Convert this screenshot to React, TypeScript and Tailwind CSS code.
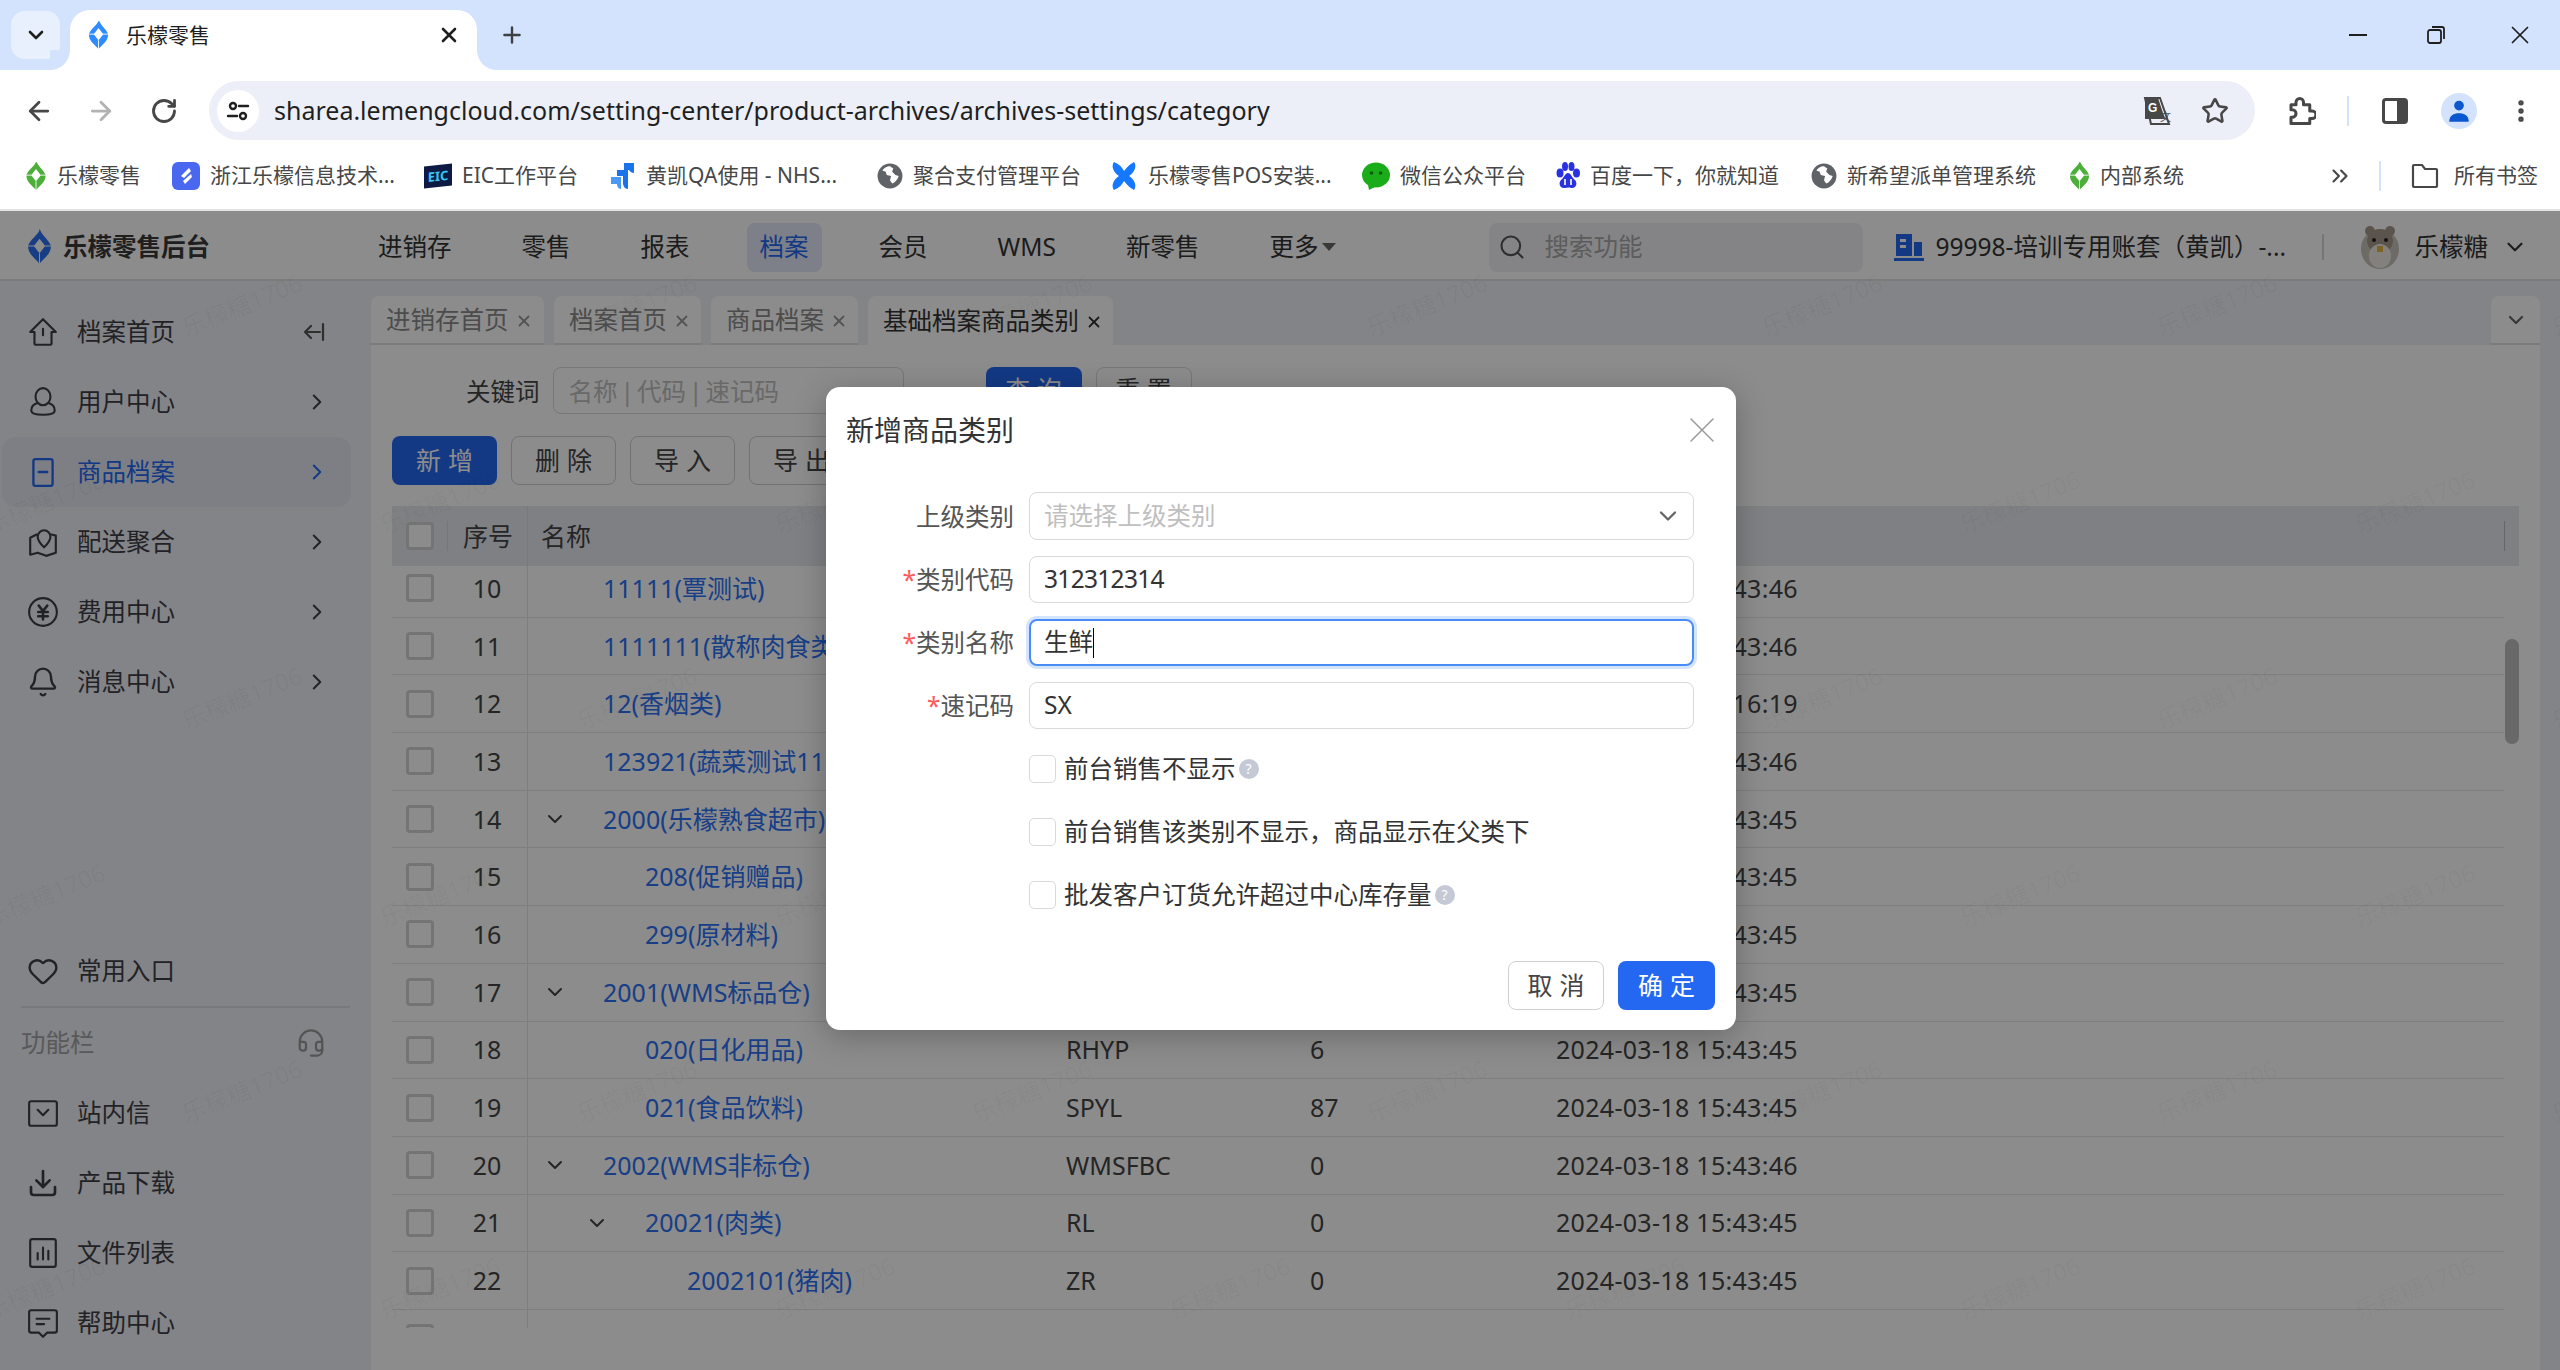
import type { ReactNode } from 'react';
import { ArrowLeft, ArrowRight, Bell, ChevronDown, ChevronRight, ChevronsRight, Download, Headset, Heart, MoreVertical, Plus, RotateCw, Search, Star, X } from 'lucide-react';

function Logo({ className, color = '#2f8cff' }: { className: string; color?: string }) {
  return (
    <svg viewBox="0 0 24 32" className={className}>
      <path d="M12 0C10 5 3 9 1 15c0 8 7 12 11 17 4-5 11-9 11-17-2-6-9-10-11-17Z" fill={color} />
      <path d="M12 8l5.5 7-5.5 7-5.5-7Z" fill="#fff" />
      <path d="M0 15h7M24 15h-7M12 22v10" stroke="#fff" strokeWidth="1" />
    </svg>
  );
}

function Globe({ className }: { className: string }) {
  return (
    <svg viewBox="0 0 24 24" className={className}>
      <circle cx="12" cy="12" r="11.5" fill="#5f6368" />
      <path d="M12 3c-3 0-6 2-7 4l3 1 1 3 4 1-1 4 2 3c3-1 5-4 6-7l-3-1-3-3 1-3Z" fill="#fff" />
    </svg>
  );
}

const bookmarks: { label: string; width: string; icon: ReactNode }[] = [
  { label: '乐檬零售', width: 'w-[147px]', icon: <Logo className="h-[28px] w-[22px]" color="#4caf3a" /> },
  {
    label: '浙江乐檬信息技术...',
    width: 'w-[252px]',
    icon: (
      <svg viewBox="0 0 28 28" className="h-[28px] w-[28px]">
        <rect width="28" height="28" rx="6" fill="#4a67f0" />
        <path d="M17 6l-8 8 3 2 7-7ZM19 12l-8 7 2 3 7-7Z" fill="#fff" />
      </svg>
    ),
  },
  {
    label: 'EIC工作平台',
    width: 'w-[184px]',
    icon: (
      <span className="flex h-[22px] w-[28px] -skew-y-6 items-center justify-center bg-[#0c1a44] text-[13px] leading-none font-bold text-[#35c8f0]">
        EIC
      </span>
    ),
  },
  {
    label: '黄凯QA使用 - NHS...',
    width: 'w-[269px]',
    icon: (
      <svg viewBox="0 0 28 28" className="h-[28px] w-[28px]">
        <path d="M16 1h10v10c-2 0-4-1-5-3h-5Z" fill="#1a73e8" />
        <path d="M9 8h11v19c-3 0-5-3-5-6v-7H9Z" fill="#1a73e8" />
        <path d="M3 15h10v12c-3 0-4-3-4-5H3Z" fill="#4a9af5" />
      </svg>
    ),
  },
  { label: '聚合支付管理平台', width: 'w-[233px]', icon: <Globe className="h-[26px] w-[26px]" /> },
  {
    label: '乐檬零售POS安装...',
    width: 'w-[252px]',
    icon: (
      <svg viewBox="0 0 28 28" className="h-[28px] w-[28px]">
        <path d="M4 0c5 2 8 5 10 9 3-4 6-7 10-9 3 4 1 10-5 14 6 4 8 10 5 14-4-2-7-5-10-9-2 4-5 7-10 9-3-4-1-10 5-14C3 10 1 4 4 0Z" fill="#1677ff" />
      </svg>
    ),
  },
  {
    label: '微信公众平台',
    width: 'w-[194px]',
    icon: (
      <svg viewBox="0 0 28 28" className="h-[28px] w-[28px]">
        <ellipse cx="14" cy="13" rx="14" ry="12.5" fill="#1aad19" />
        <path d="M6 23l1 5 6-3Z" fill="#1aad19" />
        <circle cx="9.500" cy="11" r="1.800" fill="#0d5c0d" />
        <circle cx="18.500" cy="11" r="1.800" fill="#0d5c0d" />
      </svg>
    ),
  },
  {
    label: '百度一下，你就知道',
    width: 'w-[255px]',
    icon: (
      <svg viewBox="0 0 24 28" className="h-[28px] w-[24px]">
        <g fill="#2932e1">
          <ellipse cx="4" cy="11" rx="3.500" ry="4.500" />
          <ellipse cx="9" cy="4.500" rx="3" ry="4.500" />
          <ellipse cx="15.500" cy="4.500" rx="3" ry="4.500" />
          <ellipse cx="20.500" cy="11" rx="3.500" ry="4.500" />
          <path d="M12 11c-3 0-4 5-7 7-3 3-1 9 4 8 2 0 4-1 6 0 5 1 7-5 4-8-3-2-4-7-7-7Z" />
        </g>
        <path d="M9 17v6M15 17v6" stroke="#fff" strokeWidth="1.600" />
      </svg>
    ),
  },
  { label: '新希望派单管理系统', width: 'w-[258px]', icon: <Globe className="h-[26px] w-[26px]" /> },
  { label: '内部系统', width: 'w-[150px]', icon: <Logo className="h-[28px] w-[21px]" color="#4caf3a" /> },
];

const navItems = ['进销存', '零售', '报表', '档案', '会员', 'WMS', '新零售'];

const stroke = { fill: 'none', stroke: 'currentColor', strokeWidth: 2, strokeLinecap: 'round', strokeLinejoin: 'round' } as const;

const sideIcons: Record<string, ReactNode> = {
  home: (
    <svg viewBox="0 0 30 30" className="h-[34px] w-[34px]" {...stroke}>
      <path d="M3 15 15 3l12 12h-4v11a1 1 0 0 1-1 1H8a1 1 0 0 1-1-1V15ZM15 12v6" />
    </svg>
  ),
  user: (
    <svg viewBox="0 0 30 30" className="h-[34px] w-[34px]" {...stroke}>
      <ellipse cx="15" cy="10" rx="7" ry="8" />
      <path d="M10 16c-4 1-6 4-6 7 0 3 4 4 11 4s11-1 11-4c0-3-2-6-6-7" />
    </svg>
  ),
  box: (
    <svg viewBox="0 0 30 30" className="h-[34px] w-[34px]" {...stroke}>
      <path d="M8 3h14a2 2 0 0 1 2 2v21a2 2 0 0 1-2 2H8a2 2 0 0 1-2-2V5a2 2 0 0 1 2-2ZM11 15h8" strokeWidth="2.200" />
    </svg>
  ),
  map: (
    <svg viewBox="0 0 30 30" className="h-[34px] w-[34px]" {...stroke}>
      <path d="M9 8 3 11v16l7-2 8 3 9-3V9l-4-1" />
      <path d="M16 20c-4-4-6-7-6-10a6 6 0 0 1 12 0c0 3-2 6-6 10Z" />
    </svg>
  ),
  yen: (
    <svg viewBox="0 0 30 30" className="h-[34px] w-[34px]" {...stroke}>
      <circle cx="15" cy="15" r="13" />
      <path d="m11 9 4 5 4-5M10.500 15h9M10.500 19h9M15 14v8" strokeWidth="2.400" />
    </svg>
  ),
  mail: (
    <svg viewBox="0 0 30 30" className="h-[32px] w-[32px]" {...stroke}>
      <rect x="2" y="4" width="26" height="23" rx="2" />
      <path d="m10 12 5 5 5-5" />
    </svg>
  ),
  list: (
    <svg viewBox="0 0 30 30" className="h-[32px] w-[32px]" {...stroke}>
      <rect x="3" y="2" width="24" height="26" rx="2" />
      <path d="M10 21v-6M15 21V10M20 21v-8" />
    </svg>
  ),
  help: (
    <svg viewBox="0 0 30 30" className="h-[32px] w-[32px]" {...stroke}>
      <path d="M4 3h22a2 2 0 0 1 2 2v17a2 2 0 0 1-2 2h-7l-4 4-4-4H4a2 2 0 0 1-2-2V5a2 2 0 0 1 2-2ZM9 11h12M9 16h7" />
    </svg>
  ),
};

function SideRow({ icon, label, active, arrow, trailing }: { icon: ReactNode; label: string; active?: boolean; arrow?: boolean; trailing?: ReactNode }) {
  return (
    <div className={`ml-[2px] flex h-[70px] w-[349px] items-center rounded-[14px] pl-[25px] text-[24.500px] ${active ? 'bg-[#e3e7f2] text-[#2468f2]' : 'text-[#3f3f46]'}`}>
      <span className="flex w-[32px] justify-center">{icon}</span>
      <span className="ml-[18px]">{label}</span>
      {arrow && <ChevronRight className="mr-[21px] ml-auto h-[26px] w-[26px]" strokeWidth={1.800} />}
      {trailing}
    </div>
  );
}

const pageTabs = [
  { label: '进销存首页', width: 'w-[173px]' },
  { label: '档案首页', width: 'w-[147px]' },
  { label: '商品档案', width: 'w-[147px]' },
  { label: '基础档案商品类别', width: 'w-[245px]', active: true },
];

const rows = [
  { no: 10, name: '11111(覃测试)', depth: 0, time: '15:43:46' },
  { no: 11, name: '1111111(散称肉食类)', depth: 0, time: '15:43:46' },
  { no: 12, name: '12(香烟类)', depth: 0, time: '15:16:19' },
  { no: 13, name: '123921(蔬菜测试11)', depth: 0, time: '15:43:46' },
  { no: 14, name: '2000(乐檬熟食超市)', depth: 0, open: true, time: '15:43:45' },
  { no: 15, name: '208(促销赠品)', depth: 1, time: '15:43:45' },
  { no: 16, name: '299(原材料)', depth: 1, time: '15:43:45' },
  { no: 17, name: '2001(WMS标品仓)', depth: 0, open: true, time: '15:43:45' },
  { no: 18, name: '020(日化用品)', depth: 1, code: 'RHYP', count: '6', time: '15:43:45' },
  { no: 19, name: '021(食品饮料)', depth: 1, code: 'SPYL', count: '87', time: '15:43:45' },
  { no: 20, name: '2002(WMS非标仓)', depth: 0, open: true, code: 'WMSFBC', count: '0', time: '15:43:46' },
  { no: 21, name: '20021(肉类)', depth: 1, open: true, code: 'RL', count: '0', time: '15:43:45' },
  { no: 22, name: '2002101(猪肉)', depth: 2, code: 'ZR', count: '0', time: '15:43:45' },
];

const depthPad = ['pl-[75px]', 'pl-[117px]', 'pl-[159px]'];
const depthArrow = ['left-[15px]', 'left-[57px]', 'left-[99px]'];

function Box({ className = '' }: { className?: string }) {
  return <span className={`block h-[28px] w-[28px] rounded-[4px] border-[3px] border-[#d4d4d4] bg-white ${className}`} />;
}

function Field({ label, required, children }: { label: string; required?: boolean; children: ReactNode }) {
  return (
    <div className="flex h-[48px] items-center">
      <label className="w-[188px] pt-[2px] text-right text-[24.500px] text-[#555]">
        {required && <span className="text-[#ff5a5a]">*</span>}
        {label}
      </label>
      <div className="ml-[15px] flex-1">{children}</div>
    </div>
  );
}

function Help() {
  return <span className="ml-[3px] flex h-[20px] w-[20px] items-center justify-center rounded-full bg-[#c5c9d6] text-[14px] leading-none text-white">?</span>;
}

function CheckRow({ children }: { children: ReactNode }) {
  return (
    <div className="ml-[203px] flex h-[28px] items-center">
      <span className="block h-[28px] w-[27px] rounded-[5px] border border-[#d9d9d9] bg-white" />
      <span className="ml-[8px] text-[24.500px] leading-none text-[#333]">{children}</span>
    </div>
  );
}

const watermarkSpots: { x: number; y: number }[] = [];
for (let r = 0; r < 7; r++) {
  for (let c = 0; c < 8; c++) {
    watermarkSpots.push({ x: 45 + c * 395 + (r % 2 ? 0 : 197), y: 305 + r * 196.500 });
  }
}

export default function App() {
  return (
    <div className="relative flex h-[1370px] w-[2560px] flex-col overflow-hidden bg-white font-['Noto_Sans','Noto_Sans_CJK_SC',sans-serif] text-[#333]">
      {/* browser tab strip */}
      <div className="flex h-[70px] shrink-0 bg-[#d3e3fd]">
        <button type="button" className="mt-[11px] ml-[11px] flex h-[48px] w-[49px] items-center justify-center rounded-[14px] bg-[#e9f0fd]">
          <ChevronDown className="h-[24px] w-[24px] text-[#1f1f1f]" strokeWidth={2.600} />
        </button>
        <div className="relative mt-[10px] ml-[10px] flex h-[60px] w-[407px] items-center rounded-t-[20px] bg-white pb-[10px] pl-[18px]">
          <span className="absolute right-full bottom-0 h-[20px] w-[20px] bg-white">
            <span className="block h-full w-full rounded-br-[20px] bg-[#d3e3fd]" />
          </span>
          <span className="absolute bottom-0 left-full h-[20px] w-[20px] bg-white">
            <span className="block h-full w-full rounded-bl-[20px] bg-[#d3e3fd]" />
          </span>
          <Logo className="h-[28px] w-[21px]" />
          <span className="ml-[17px] text-[21px] leading-none text-[#1f1f1f]">乐檬零售</span>
          <X className="absolute top-[13px] right-[16px] h-[24px] w-[24px] text-[#1f1f1f]" strokeWidth={2.600} />
        </div>
        <Plus className="mt-[22px] ml-[22px] h-[26px] w-[26px] text-[#3c4043]" strokeWidth={2.200} />
        <div className="ml-auto flex h-full items-center gap-[59px] pr-[25px] text-[#1f1f1f]">
          <span className="block h-[2px] w-[18px] bg-[#1f1f1f]" />
          <svg viewBox="0 0 20 20" className="h-[20px] w-[20px]" fill="none" stroke="currentColor" strokeWidth="1.800">
            <rect x="2" y="5" width="13" height="13" rx="2" />
            <path d="M6 2h10a2 2 0 0 1 2 2v10" />
          </svg>
          <X className="h-[30px] w-[30px]" strokeWidth={1.400} />
        </div>
      </div>

      {/* address bar */}
      <div className="flex h-[70px] shrink-0 items-center rounded-t-[20px] bg-white pt-[11px]">
        <ArrowLeft className="ml-[24px] h-[30px] w-[30px] text-[#474747]" strokeWidth={2.200} />
        <ArrowRight className="ml-[32px] h-[30px] w-[30px] text-[#b2b2b2]" strokeWidth={2.200} />
        <RotateCw className="ml-[34px] h-[28px] w-[28px] text-[#474747]" strokeWidth={2.400} />
        <div className="ml-[31px] flex h-[59px] w-[2046px] items-center rounded-full bg-[#eceff8]">
          <span className="ml-[8px] flex h-[42px] w-[42px] items-center justify-center rounded-full bg-white">
            <svg viewBox="0 0 24 24" className="h-[24px] w-[24px]" fill="none" stroke="#1f1f1f" strokeWidth="2.400" strokeLinecap="round">
              <circle cx="7" cy="7" r="3" />
              <circle cx="17" cy="17" r="3" />
              <path d="M13 7h9M2 17h9" />
            </svg>
          </span>
          <span className="ml-[15px] text-[25px] leading-none text-[#1f1f1f]">sharea.lemengcloud.com/setting-center/product-archives/archives-settings/category</span>
          <span className="mr-[26px] ml-auto flex items-center gap-[28px] text-[#474747]">
            <svg viewBox="0 0 30 30" className="h-[30px] w-[30px]">
              <path d="M2 2h15l9 26H8Z" fill="none" stroke="#474747" strokeWidth="2" />
              <path d="M2 2h13l7 21H2Z" fill="#474747" />
              <text x="5" y="16" fontSize="12" fontWeight="700" fill="#fff" fontFamily="Liberation Sans">G</text>
              <text x="17" y="25" fontSize="11" fill="#474747" fontFamily="Noto Sans CJK SC">文</text>
            </svg>
            <Star className="h-[28px] w-[28px]" strokeWidth={2.200} />
          </span>
        </div>
        <svg viewBox="0 0 24 24" className="ml-[31px] h-[30px] w-[30px]" fill="none" stroke="#474747" strokeWidth="2.400" strokeLinejoin="round">
          <path d="M4 7h4V5a3 3 0 0 1 6 0v2h5v5h2a3 3 0 0 1 0 6h-2v4H4v-5h1a3 3 0 0 0 0-6H4Z" />
        </svg>
        <span className="ml-[31px] h-[30px] w-[2px] bg-[#d3e3fd]" />
        <svg viewBox="0 0 26 26" className="ml-[33px] h-[26px] w-[26px]" fill="none">
          <rect x="1.500" y="1.500" width="23" height="23" rx="2.500" stroke="#474747" strokeWidth="3" />
          <rect x="15" y="2" width="9" height="22" fill="#474747" />
        </svg>
        <span className="ml-[33px] flex h-[36px] w-[36px] items-center justify-center rounded-full bg-[#d3e3fd]">
          <svg viewBox="0 0 24 24" className="h-[26px] w-[26px]" fill="#0b57d0">
            <circle cx="12" cy="7" r="4.500" />
            <path d="M3 22c0-6 4-8 9-8s9 2 9 8Z" />
          </svg>
        </span>
        <MoreVertical className="ml-[30px] h-[28px] w-[28px] text-[#474747]" strokeWidth={2.600} />
      </div>

      {/* bookmarks */}
      <div className="flex h-[71px] shrink-0 items-center border-b-2 border-[#e4e4e4] bg-white pt-[2px] pl-[25px] text-[21px] leading-none text-[#474747]">
        {bookmarks.map((b) => (
          <div key={b.label} className={`flex shrink-0 items-center gap-[10px] ${b.width}`}>
            {b.icon}
            <span className="whitespace-nowrap">{b.label}</span>
          </div>
        ))}
        <ChevronsRight className="ml-[108px] h-[26px] w-[26px]" strokeWidth={2} />
        <span className="ml-[26px] h-[30px] w-[2px] bg-[#d3e3fd]" />
        <svg viewBox="0 0 28 26" className="ml-[30px] h-[26px] w-[28px]" fill="none" stroke="#474747" strokeWidth="2.200">
          <path d="M2 3a1 1 0 0 1 1-1h8l3 4h11a1 1 0 0 1 1 1v16a1 1 0 0 1-1 1H3a1 1 0 0 1-1-1Z" />
        </svg>
        <span className="ml-[15px]">所有书签</span>
      </div>

      {/* app */}
      <div className="relative flex min-h-0 flex-1 flex-col bg-[#eef0f6]">
        <header className="flex h-[70px] shrink-0 items-center border-b-2 border-[#e0e0e0] bg-white pt-[4px] text-[24.500px] leading-none">
          <Logo className="ml-[27px] h-[36px] w-[25px]" color="#2b6ff0" />
          <span className="ml-[11px] font-bold text-[#3a3a3a]">乐檬零售后台</span>
          <nav className="ml-[168px] flex items-center gap-[70px]">
            {navItems.map((item) => (
              <span key={item} className={item === '档案' ? '-mx-[13px] flex h-[49px] items-center rounded-[8px] bg-[#e3e9f8] px-[13px] text-[#2468f2]' : 'text-[#333]'}>
                {item}
              </span>
            ))}
            <span className="flex items-center text-[#333]">
              更多
              <span className="ml-[4px] h-0 w-0 border-x-[7px] border-t-[8px] border-x-transparent border-t-[#666]" />
            </span>
          </nav>
          <div className="ml-[153px] flex h-[49px] w-[374px] items-center rounded-[8px] bg-[#f0f1f5] text-[#a8a8a8]">
            <Search className="ml-[9px] h-[28px] w-[28px] text-[#555]" strokeWidth={1.800} />
            <span className="ml-[18px]">搜索功能</span>
          </div>
          <svg viewBox="0 0 30 28" className="ml-[31px] h-[28px] w-[30px]" fill="#2468f2">
            <path d="M2 1h16v22H2ZM20 9h8v14h-8ZM0 25h30v3H0Z" />
            <path d="M6 6h6v3H6ZM6 12h6v3H6Z" fill="#fff" />
          </svg>
          <span className="ml-[11px] w-[348px] whitespace-nowrap">99998-培训专用账套（黄凯）-...</span>
          <span className="ml-[39px] h-[26px] w-[2px] bg-[#d8d8d8]" />
          <svg viewBox="0 0 40 44" className="ml-[36px] h-[44px] w-[40px]">
            <ellipse cx="20" cy="24" rx="19" ry="20" fill="#c9c4bc" />
            <circle cx="10" cy="6" r="5" fill="#a79a8b" />
            <circle cx="30" cy="6" r="5" fill="#a79a8b" />
            <ellipse cx="20" cy="16" rx="13" ry="12" fill="#a79a8b" />
            <ellipse cx="20" cy="31" rx="11" ry="12" fill="#efece6" />
            <circle cx="14" cy="15" r="2" fill="#222" />
            <circle cx="26" cy="15" r="2" fill="#222" />
            <rect x="17" y="21" width="6" height="6" fill="#e3b23c" />
          </svg>
          <span className="ml-[14px] text-[#333]">乐檬糖</span>
          <ChevronDown className="ml-[14px] h-[26px] w-[26px] text-[#333]" strokeWidth={2} />
        </header>

        <div className="flex min-h-0 flex-1">
          <aside className="flex w-[371px] shrink-0 flex-col pt-[16px] pb-[12px]">
            <SideRow
              icon={sideIcons.home}
              label="档案首页"
              trailing={
                <svg viewBox="0 0 24 24" className="mr-[25px] ml-auto h-[24px] w-[24px]" fill="none" stroke="#555" strokeWidth="2.200" strokeLinecap="round" strokeLinejoin="round">
                  <path d="M21 4v16M18 12H3M9 6l-6 6 6 6" />
                </svg>
              }
            />
            <SideRow icon={sideIcons.user} label="用户中心" arrow />
            <SideRow icon={sideIcons.box} label="商品档案" active arrow />
            <SideRow icon={sideIcons.map} label="配送聚合" arrow />
            <SideRow icon={sideIcons.yen} label="费用中心" arrow />
            <SideRow icon={<Bell className="h-[34px] w-[34px]" strokeWidth={1.800} />} label="消息中心" arrow />

            <div className="mt-auto">
              <SideRow icon={<Heart className="h-[34px] w-[34px]" strokeWidth={1.800} />} label="常用入口" />
              <div className="mx-[21px] h-[2px] bg-[#dcdde2]" />
              <div className="flex h-[70px] items-center justify-between pr-[45px] pl-[21px] text-[24.500px] text-[#a3a3a3]">
                功能栏
                <Headset className="h-[30px] w-[30px] text-[#9a9a9a]" strokeWidth={1.800} />
              </div>
              <SideRow icon={sideIcons.mail} label="站内信" />
              <SideRow icon={<Download className="h-[32px] w-[32px]" strokeWidth={2} />} label="产品下载" />
              <SideRow icon={sideIcons.list} label="文件列表" />
              <SideRow icon={sideIcons.help} label="帮助中心" />
            </div>
          </aside>

          <main className="flex min-w-0 flex-1 flex-col pt-[15px] pr-[20px] text-[24.500px] leading-none">
            <div className="flex h-[49px] shrink-0 gap-[10px]">
              {pageTabs.map((t) => (
                <div key={t.label} className={`flex items-center rounded-t-[8px] pt-[2px] pl-[15px] ${t.width} ${t.active ? 'bg-white text-[#333]' : 'border-b-2 border-[#e0e0e0] bg-white text-[#8a8a8a]'}`}>
                  {t.label}
                  <X className={`ml-[6px] h-[18px] w-[18px] ${t.active ? 'text-[#333]' : 'text-[#999]'}`} strokeWidth={2.400} />
                </div>
              ))}
              <div className="ml-auto flex w-[49px] items-center justify-center rounded-t-[8px] border-b-2 border-[#e0e0e0] bg-white">
                <ChevronDown className="h-[24px] w-[24px] text-[#666]" strokeWidth={2.200} />
              </div>
            </div>

            <div className="flex min-h-0 flex-1 flex-col bg-white px-[21px]">
              <div className="mt-[22px] flex h-[47px] shrink-0 items-center">
                <span className="ml-[74px] pt-[3px] text-[#444]">关键词</span>
                <div className="ml-[13px] flex h-[47px] w-[351px] items-center rounded-[8px] border border-[#d9d9d9] pt-[3px] pl-[15px] text-[#bfbfbf]">
                  名称<span className="mx-[3px]">|</span>代码<span className="mx-[3px]">|</span>速记码
                </div>
                <button type="button" className="ml-[82px] h-[48px] w-[96px] rounded-[8px] bg-[#2468f2] pl-[7px] tracking-[7px] text-white">查询</button>
                <button type="button" className="ml-[14px] h-[48px] w-[96px] rounded-[8px] border border-[#d9d9d9] pl-[7px] tracking-[7px] text-[#444]">重置</button>
              </div>
              <div className="mt-[22px] flex shrink-0 gap-[14px]">
                <button type="button" className="h-[49px] w-[105px] rounded-[8px] bg-[#2468f2] pl-[7px] text-[25px] tracking-[7px] text-white">新增</button>
                {['删除', '导入', '导出'].map((label) => (
                  <button key={label} type="button" className="h-[49px] w-[105px] rounded-[8px] border border-[#d0d0d0] bg-white pl-[7px] text-[25px] tracking-[7px] text-[#444]">{label}</button>
                ))}
              </div>

              <div className="mt-[21px] flex h-[60px] shrink-0 items-center bg-[#e8eaef] text-[25px] text-[#444]">
                <span className="flex w-[55px] justify-center"><Box /></span>
                <span className="h-[30px] w-px bg-[#d8d8d8]" />
                <span className="w-[79px] pl-[15px]">序号</span>
                <span className="h-[60px] w-px bg-[#dcdcdc]" />
                <span className="pl-[13px]">名称</span>
                <span className="mr-[14px] ml-auto h-[30px] w-px bg-[#bbb]" />
              </div>

              <div className="relative h-[762px] shrink-0 overflow-hidden text-[25px]">
                <div className="-mt-[6px] w-[2112px]">
                  {[...rows, { no: 23, name: '', depth: 0, time: '' }].map((row) => (
                    <div key={row.no} className="flex h-[57.700px] items-center border-b border-[#e6e6e6] text-[#444]">
                      <span className="flex w-[55px] justify-center"><Box /></span>
                      <span className="w-[80px] text-center">{row.no}</span>
                      <div className={`relative flex h-full w-[526px] items-center border-l border-[#e6e6e6] whitespace-nowrap text-[#2b72f5] ${depthPad[row.depth]}`}>
                        {row.open && <ChevronDown className={`absolute h-[24px] w-[24px] text-[#444] ${depthArrow[row.depth]}`} strokeWidth={2} />}
                        {row.name}
                      </div>
                      <span className="w-[244px] pl-[13px]">{row.code}</span>
                      <span className="w-[246px] pl-[13px]">{row.count}</span>
                      <span className="pl-[13px] tracking-[0.3px]">{row.time && `2024-03-18 ${row.time}`}</span>
                    </div>
                  ))}
                </div>
                <span className="absolute top-[73px] right-0 h-[105px] w-[14px] rounded-full bg-[#bdbdbd]" />
              </div>
            </div>
          </main>
        </div>

        {/* watermark */}
        <div className="pointer-events-none absolute inset-0 overflow-hidden">
          {watermarkSpots.map((p) => (
            <span
              key={`${p.x}-${p.y}`}
              className="absolute -translate-x-1/2 -translate-y-1/2 -rotate-[22deg] text-[24px] leading-none whitespace-nowrap text-[#000]/[0.04]"
              style={{ left: p.x, top: p.y - 211 }}
            >
              乐檬糖1706
            </span>
          ))}
        </div>
        {/* modal mask */}
        <div className="absolute inset-0 bg-black/45" />
      </div>

      {/* dialog */}
      <div className="absolute top-[387px] left-[826px] flex h-[643px] w-[910px] flex-col rounded-[14px] bg-white shadow-[0_6px_30px_rgba(0,0,0,0.25)]">
        <div className="flex h-[86px] shrink-0 items-center justify-between pr-[12px] pl-[20px]">
          <h2 className="text-[28px] leading-none font-normal text-[#333]">新增商品类别</h2>
          <X className="h-[44px] w-[44px] text-[#999]" strokeWidth={0.800} />
        </div>
        <div className="mt-[19px] flex flex-col gap-[15px] pr-[42px]">
          <Field label="上级类别">
            <div className="flex h-[48px] items-center justify-between rounded-[8px] border border-[#d9d9d9] pr-[11px] pl-[14px] text-[24.500px] text-[#bfbfbf]">
              <span className="pt-[1px]">请选择上级类别</span>
              <ChevronDown className="h-[28px] w-[28px] text-[#666]" strokeWidth={2} />
            </div>
          </Field>
          <Field label="类别代码" required>
            <div className="flex h-[47px] items-center rounded-[8px] border border-[#d9d9d9] px-[14px] pt-[1px] text-[24.500px] tracking-[-0.7px] text-[#333]">312312314</div>
          </Field>
          <Field label="类别名称" required>
            <div className="flex h-[47px] items-center rounded-[8px] border-2 border-[#4a8cf7] px-[13px] pt-[1px] text-[24.500px] text-[#333] shadow-[0_0_0_3px_#d5e4fd]">
              生鲜
              <span className="h-[30px] w-px bg-black" />
            </div>
          </Field>
          <Field label="速记码" required>
            <div className="flex h-[47px] items-center rounded-[8px] border border-[#d9d9d9] px-[14px] pt-[1px] text-[24.500px] text-[#333]">SX</div>
          </Field>
        </div>
        <div className="mt-[26px] flex flex-col gap-[35px]">
          <CheckRow><span className="flex items-center">前台销售不显示<Help /></span></CheckRow>
          <CheckRow>前台销售该类别不显示，商品显示在父类下</CheckRow>
          <CheckRow><span className="flex items-center">批发客户订货允许超过中心库存量<Help /></span></CheckRow>
        </div>
        <div className="mt-auto flex justify-end gap-[14px] pr-[21px] pb-[20px]">
          <button type="button" className="h-[49px] w-[96px] rounded-[8px] border border-[#d0d0d0] pl-[7px] text-[25px] tracking-[7px] text-[#444]">取消</button>
          <button type="button" className="h-[49px] w-[97px] rounded-[8px] bg-[#2468f2] pl-[7px] text-[25px] tracking-[7px] text-white">确定</button>
        </div>
      </div>
    </div>
  );
}
